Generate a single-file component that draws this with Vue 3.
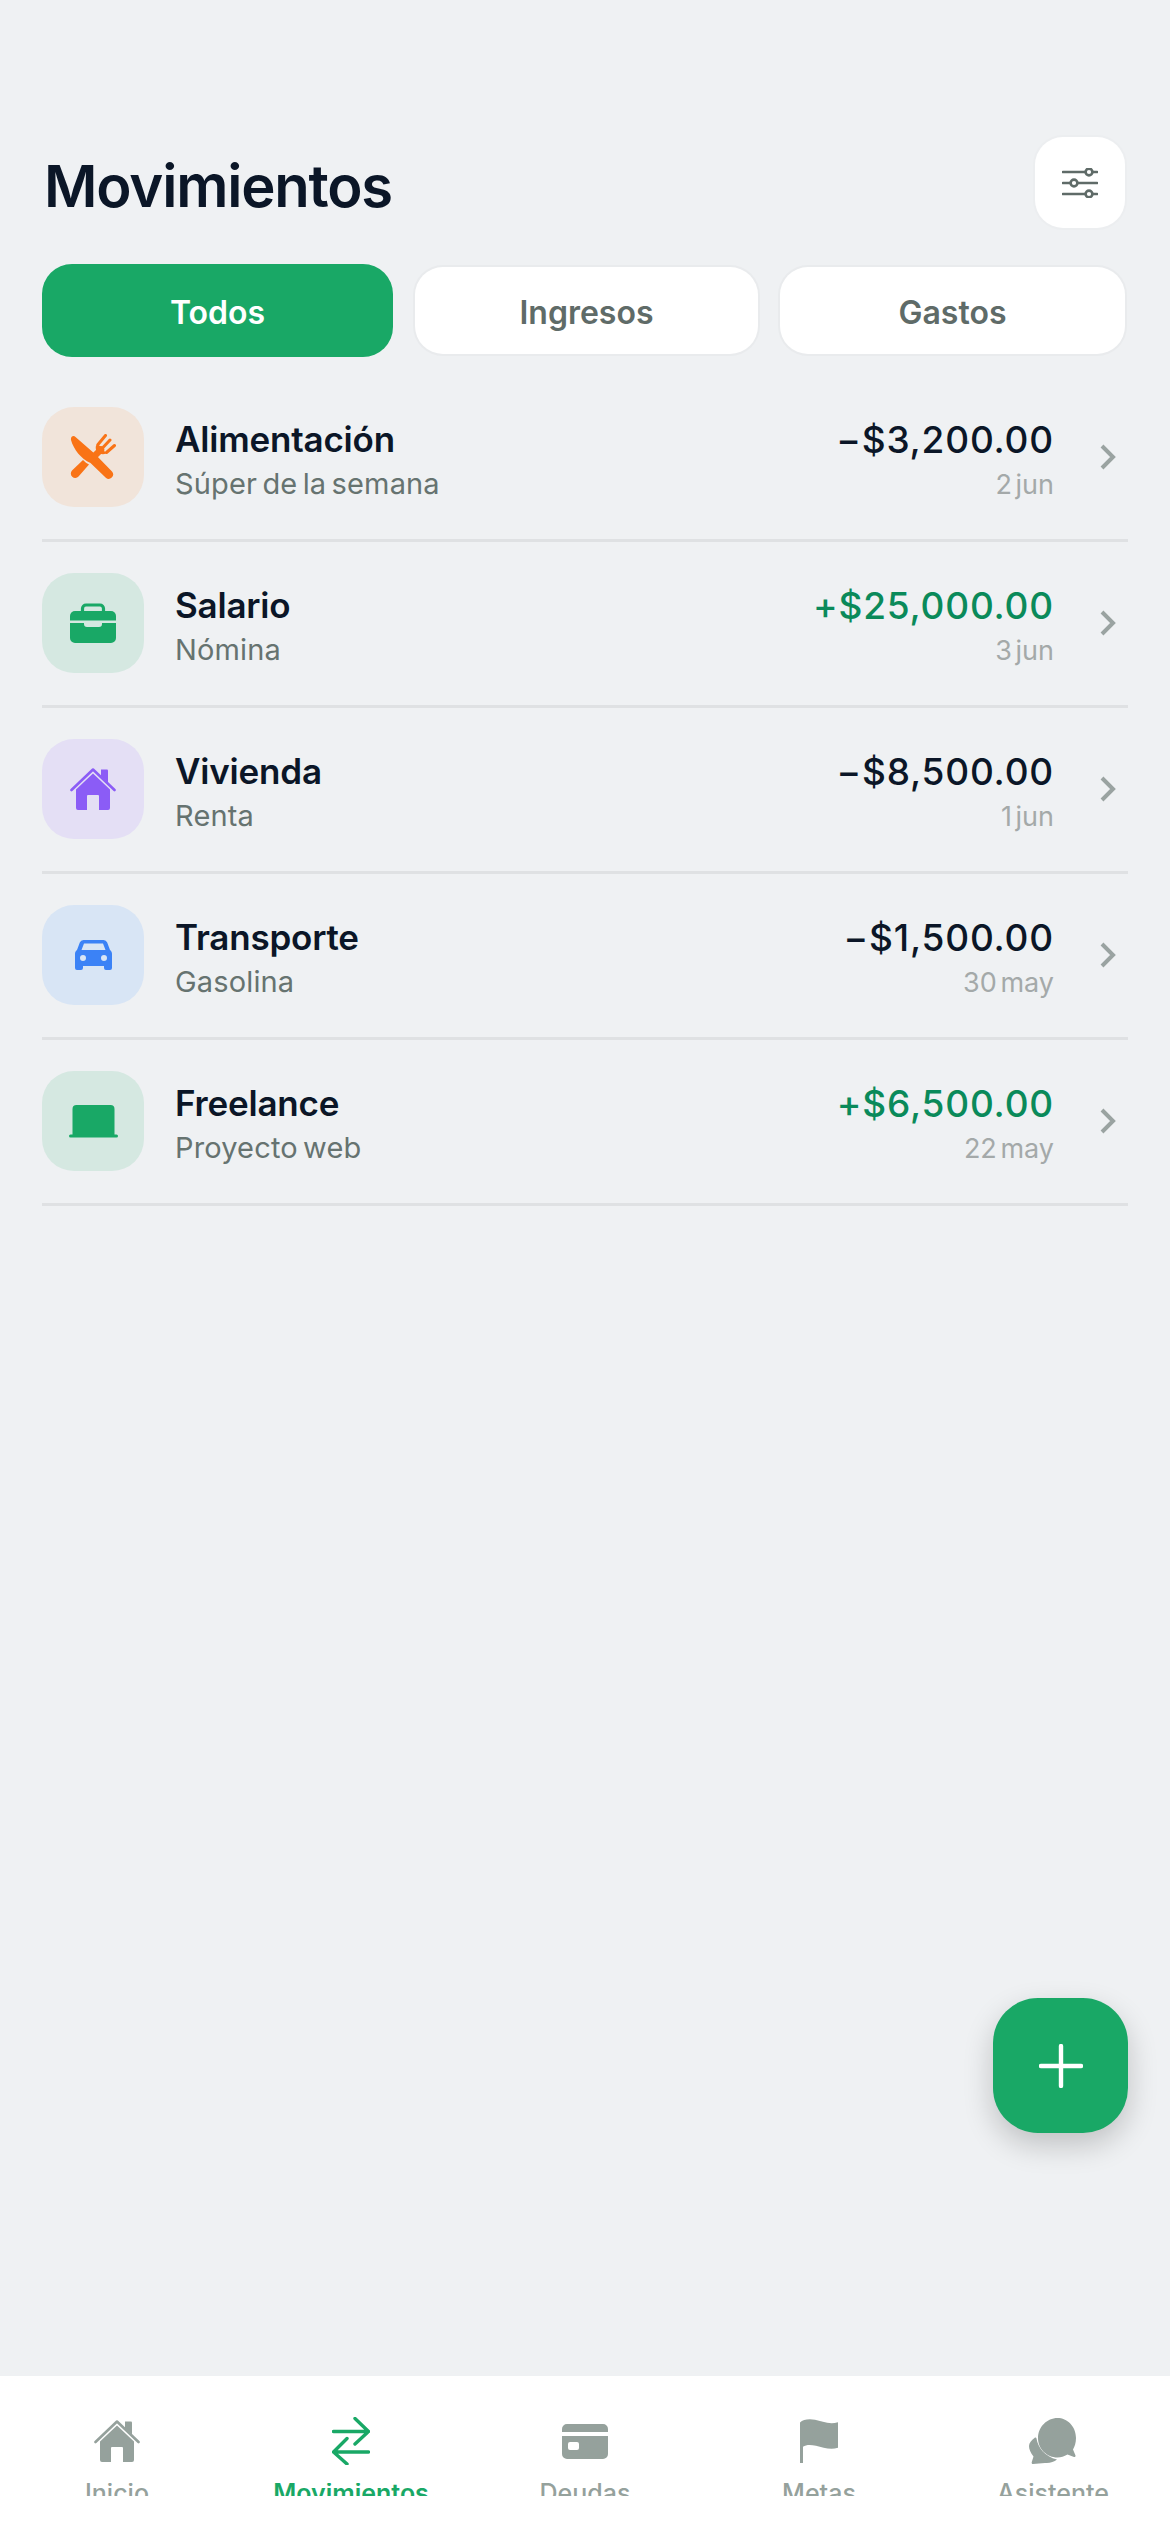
<template>
  <div class="page">
    <main class="content">
      <header class="head">
        <h1>Movimientos</h1>
        <button class="filter-btn">
          <svg width="36" height="30" viewBox="0 0 36 30" fill="none" stroke="#5f6b68" stroke-width="2.6" stroke-linecap="round">
            <path d="M1 4h22M31 4h4M1 15h7M16 15h19M1 26h22M31 26h4" />
            <circle cx="27" cy="4" r="3.4" />
            <circle cx="12" cy="15" r="3.4" />
            <circle cx="27" cy="26" r="3.4" />
          </svg>
        </button>
      </header>

      <div class="tabs">
        <button v-for="tab in tabs" :key="tab" class="tab" :class="{ active: tab === activeTab }" @click="activeTab = tab">
          {{ tab }}
        </button>
      </div>

      <ul class="list">
        <li v-for="item in movements" :key="item.title" class="row">
          <div class="tile" :class="item.tone">
            <svg :width="icons[item.icon].w" :height="icons[item.icon].h" :viewBox="`0 0 ${icons[item.icon].w} ${icons[item.icon].h}`">
              <path
                v-for="(p, i) in icons[item.icon].paths"
                :key="i"
                :d="p.d"
                :fill="p.s ? 'none' : p.c || 'currentColor'"
                :stroke="p.s ? p.c || 'currentColor' : 'none'"
                :stroke-width="p.s"
                :fill-rule="p.even ? 'evenodd' : 'nonzero'"
                stroke-linecap="round"
                stroke-linejoin="round"
              />
            </svg>
          </div>
          <div class="info">
            <div class="title">{{ item.title }}</div>
            <div class="sub">{{ item.sub }}</div>
          </div>
          <div class="money">
            <div class="amount" :class="{ plus: item.amount[0] === '+' }">{{ item.amount }}</div>
            <div class="date">{{ item.date }}</div>
          </div>
          <svg class="chevron" width="16" height="26" viewBox="0 0 16 26" fill="none" stroke="#9aa3a1" stroke-width="4" stroke-linejoin="miter">
            <path d="M2 2l11 11L2 24" />
          </svg>
        </li>
      </ul>
    </main>

    <button class="fab">
      <svg width="44" height="44" viewBox="0 0 44 44" fill="none" stroke="#fff" stroke-width="4.4" stroke-linecap="round">
        <path d="M22 2v40M2 22h40" />
      </svg>
    </button>

    <nav class="nav">
      <div v-for="tab in navTabs" :key="tab.label" class="nav-item" :class="{ current: tab.current }">
        <div class="nav-icon">
          <svg :width="icons[tab.icon].w" :height="icons[tab.icon].h" :viewBox="`0 0 ${icons[tab.icon].w} ${icons[tab.icon].h}`">
            <path
              v-for="(p, i) in icons[tab.icon].paths"
              :key="i"
              :d="p.d"
              :fill="p.s ? 'none' : p.c || 'currentColor'"
              :stroke="p.s ? p.c || 'currentColor' : 'none'"
              :stroke-width="p.s"
              :fill-rule="p.even ? 'evenodd' : 'nonzero'"
              stroke-linecap="round"
              stroke-linejoin="round"
            />
          </svg>
        </div>
        <div class="nav-label"><span>{{ tab.label }}</span></div>
      </div>
    </nav>
  </div>
</template>

<script setup>
import { ref } from 'vue';

const tabs = ['Todos', 'Ingresos', 'Gastos'];
const activeTab = ref('Todos');

const houseBody = 'M6 21.5L23 5.5l17 16V40a2 2 0 0 1-2 2H29V28a1 1 0 0 0-1-1h-10a1 1 0 0 0-1 1v14H8a2 2 0 0 1-2-2z';

const icons = {
  food: {
    w: 46,
    h: 46,
    paths: [
      { d: 'M1 6C.5 2.5 3.500 1 5.500 3L25 20l17 17.500a4.400 4.400 0 0 1-6.200 6.200L20.500 29C11 25 3.500 15 1 6z' },
      { d: 'M2 36.500L13 26c2 2 4 3.500 6 4.500L8.500 42.500a4.400 4.400 0 0 1-6.500-6z' },
      { d: 'M25 21.500l6-6', s: 6.500 },
      { d: 'M35.500 1.500l-7.500 9M40 6l-7.500 8M44.500 11.500l-8 7', s: 3 },
      { d: 'M27 10c-2 2.500-1.500 6 .5 8s5.500 3 8.500 1.500l-4-6z' },
    ],
  },
  case: {
    w: 46,
    h: 40,
    paths: [
      { d: 'M12.500 9V5.500A3.500 3.500 0 0 1 16 2h14a3.500 3.500 0 0 1 3.500 3.500V9', s: 3.200 },
      { d: 'M5 8h36a5 5 0 0 1 5 5v4.500H0V13a5 5 0 0 1 5-5z' },
      { d: 'M0 20h14v1a3 3 0 0 0 3 3h12a3 3 0 0 0 3-3v-1h14v15a5 5 0 0 1-5 5H5a5 5 0 0 1-5-5z' },
    ],
  },
  home: {
    w: 46,
    h: 43,
    paths: [
      { d: 'M31 1.500h6a1 1 0 0 1 1 1v12l-7-6.500z' },
      { d: 'M1.500 22L23 1.500 44.500 22', s: 2.600 },
      { d: houseBody },
    ],
  },
  car: {
    w: 37,
    h: 30,
    paths: [
      { d: 'M8.500 0h20a4 4 0 0 1 3.700 2.500L35 10c1.300 1 2 2.300 2 4v14a2 2 0 0 1-2 2h-4a2 2 0 0 1-2-2v-2H8v2a2 2 0 0 1-2 2H2a2 2 0 0 1-2-2V14c0-1.700.7-3 2-4l2.800-7.500A4 4 0 0 1 8.500 0zM9 3.500L6.500 10h24L28 3.500zM8 15a3 3 0 1 0 0 6 3 3 0 0 0 0-6zM29 15a3 3 0 1 0 0 6 3 3 0 0 0 0-6z', even: true },
    ],
  },
  laptop: {
    w: 49,
    h: 33,
    paths: [
      { d: 'M7.500 0h34a4 4 0 0 1 4 4v26h-42V4a4 4 0 0 1 4-4z' },
      { d: 'M1.500 31h46', s: 3 },
    ],
  },
  arrows: {
    w: 38,
    h: 48,
    paths: [
      { d: 'M1.500 14.500h35M23 1.500l13.500 13L23 27', s: 3.400 },
      { d: 'M36.500 35H1.500M15 21.500L1.500 35 15 47', s: 3.400 },
    ],
  },
  card: {
    w: 46,
    h: 35,
    paths: [
      { d: 'M5 0h36a5 5 0 0 1 5 5v3H0V5a5 5 0 0 1 5-5zM0 12h46v18a5 5 0 0 1-5 5H5a5 5 0 0 1-5-5zM8 18a2 2 0 0 0-2 2v4a2 2 0 0 0 2 2h7a2 2 0 0 0 2-2v-4a2 2 0 0 0-2-2z', even: true },
    ],
  },
  flag: {
    w: 38,
    h: 44,
    paths: [
      { d: 'M0 3.500C3 .500 9-.500 15 .800c7 1.500 14 5 23 2.500v25.500c-8 2.500-15-.500-22-2-6-1.300-10-1-13 1V44H0z' },
    ],
  },
  chat: {
    w: 48,
    h: 46,
    paths: [
      { d: 'M28.500 0C38 0 47 8 47 20c0 5-1.500 9-3 11.500l2.500 6c.3 1-.5 1.800-1.500 1.500l-6.500-2.500C35 38.500 32 39.500 28.500 39.500 18 39.500 9 31 9 20S18 0 28.500 0z' },
      { d: 'M5.500 20c.8-.8 1.800-.5 2 .5C9 30 16 38.500 28 41.500c-3 2.500-7.500 4-12 3.500L4 46c-1 0-1.500-.8-1.300-1.800L4.500 38.500C1.500 35 0 31 0 28s2.500-6 5.500-8z' },
    ],
  },
};

const movements = [
  { title: 'Alimentación', sub: 'Súper de la semana', amount: '−$3,200.00', date: '2 jun', icon: 'food', tone: 'orange' },
  { title: 'Salario', sub: 'Nómina', amount: '+$25,000.00', date: '3 jun', icon: 'case', tone: 'green' },
  { title: 'Vivienda', sub: 'Renta', amount: '−$8,500.00', date: '1 jun', icon: 'home', tone: 'purple' },
  { title: 'Transporte', sub: 'Gasolina', amount: '−$1,500.00', date: '30 may', icon: 'car', tone: 'blue' },
  { title: 'Freelance', sub: 'Proyecto web', amount: '+$6,500.00', date: '22 may', icon: 'laptop', tone: 'green' },
];

const navTabs = [
  { label: 'Inicio', icon: 'home' },
  { label: 'Movimientos', icon: 'arrows', current: true },
  { label: 'Deudas', icon: 'card' },
  { label: 'Metas', icon: 'flag' },
  { label: 'Asistente', icon: 'chat' },
];
</script>

<style scoped>
.page {
  position: relative;
  display: flex;
  flex-direction: column;
  height: 2532px;
  overflow: hidden;
  background: #eff1f3;
  font-family: Inter, "Liberation Sans", sans-serif;
}

.content {
  flex: 1;
  padding: 137px 42px 0;
}

.head {
  display: flex;
  align-items: center;
  justify-content: space-between;
  padding: 0 3px 0 2px;
}

h1 {
  margin: 6px 0 0;
  font-size: 58px;
  font-weight: 600;
  letter-spacing: -1.2px;
  color: #0b1627;
}

.filter-btn {
  display: flex;
  align-items: center;
  justify-content: center;
  width: 90px;
  height: 91px;
  padding: 0;
  border: none;
  border-radius: 28px;
  background: #fff;
  box-shadow: 0 0 0 2px #eceef0;
}

.tabs {
  display: grid;
  grid-template-columns: 351fr 343fr 345fr;
  gap: 22px;
  align-items: center;
  margin-top: 36px;
  padding-right: 3px;
}

.tab {
  height: 87px;
  padding: 3px 0 0;
  border: none;
  border-radius: 28px;
  background: #fff;
  box-shadow: 0 0 0 2px #e9ebed;
  color: #5f6b68;
  font-family: inherit;
  font-size: 32px;
  font-weight: 600;
}

.tab.active {
  height: 93px;
  border-radius: 30px;
  background: #19a866;
  box-shadow: none;
  color: #fff;
}

.list {
  margin: 19px 0 0;
  padding: 0;
  list-style: none;
}

.row {
  display: flex;
  align-items: center;
  height: 166px;
  padding-bottom: 1px;
  box-sizing: border-box;
  border-bottom: 3px solid #dfe1e3;
}

.tile {
  display: flex;
  flex-shrink: 0;
  align-items: center;
  justify-content: center;
  width: 102px;
  height: 100px;
  border-radius: 32px;
}

.tile.orange { background: #f1e4da; color: #f97316; }
.tile.green { background: #d5e8e1; color: #19a866; }
.tile.purple { background: #e4dff5; color: #8b5cf6; }
.tile.blue { background: #d8e5f5; color: #3b82f6; }

.info {
  flex: 1;
  margin-left: 31px;
  padding-top: 5.5px;
}

.title {
  font-size: 35px;
  line-height: 44px;
  font-weight: 600;
  letter-spacing: -0.2px;
  color: #0b1627;
}

.sub {
  margin-top: 3.5px;
  font-size: 29px;
  line-height: 38px;
  letter-spacing: 0.15px;
  word-spacing: -3px;
  color: #667370;
}

.money {
  padding-top: 7px;
  text-align: right;
}

.amount {
  font-size: 37px;
  line-height: 44px;
  font-weight: 500;
  letter-spacing: 0.8px;
  color: #0b1627;
}

.amount.plus {
  color: #0a8a5a;
}

.date {
  margin-top: 4px;
  font-size: 27px;
  line-height: 38px;
  word-spacing: -4px;
  color: #a4a9a9;
}

.chevron {
  flex-shrink: 0;
  margin: 0 12px 0 46px;
}

.fab {
  position: absolute;
  top: 1998px;
  left: 993px;
  display: flex;
  align-items: center;
  justify-content: center;
  width: 135px;
  height: 135px;
  padding: 0;
  border: none;
  border-radius: 45px;
  background: #19a866;
  box-shadow: 0 12px 30px rgba(0, 0, 0, 0.2);
}

.nav {
  display: grid;
  grid-template-columns: repeat(5, 1fr);
  height: 156px;
  background: #fff;
  color: #95a19c;
}

.nav-item {
  display: flex;
  flex-direction: column;
  align-items: center;
  padding-top: 41px;
}

.nav-item.current {
  color: #19a866;
}

.nav-icon {
  display: flex;
  align-items: center;
  justify-content: center;
  height: 48px;
}

/* el texto queda cortado abajo, igual que en la captura */
.nav-label {
  height: 13px;
  margin-top: 18px;
  overflow: hidden;
  font-size: 25px;
  line-height: 32px;
  font-weight: 500;
}

.nav-item.current .nav-label {
  font-weight: 600;
}

.nav-label span {
  display: block;
  margin-top: -6px;
}
</style>
